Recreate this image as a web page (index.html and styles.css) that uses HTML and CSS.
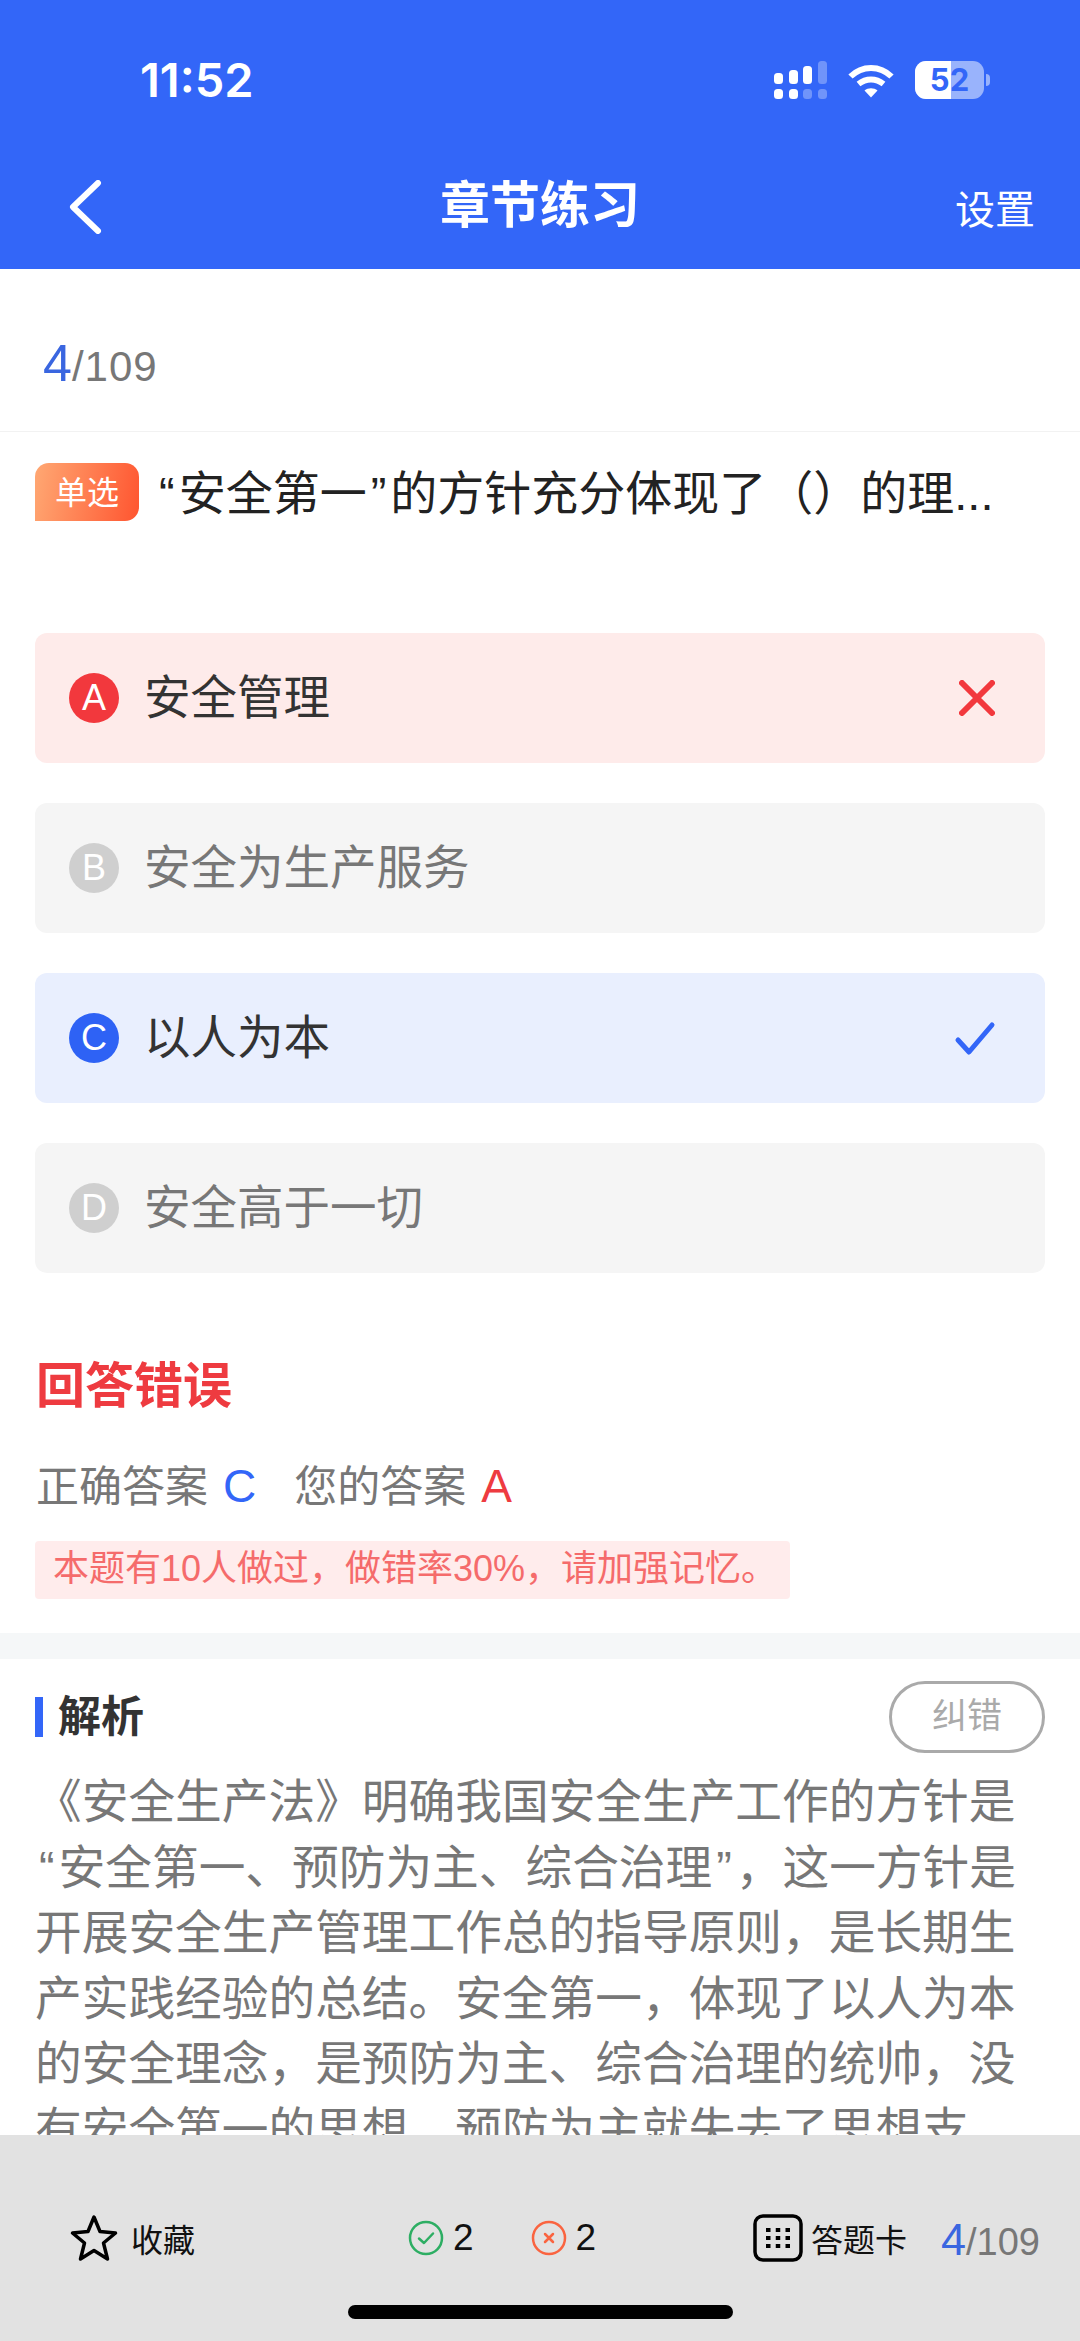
FILE: index.html
```html
<!DOCTYPE html>
<html lang="zh-CN">
<head>
<meta charset="utf-8">
<title>章节练习</title>
<link rel="stylesheet" href="styles.css">
</head>
<body>
<div class="page">
  <header class="header">
    <div class="status">
      <span class="time">11:52</span>
      <div class="status-icons">
        <svg class="signal" width="54" height="38" viewBox="0 0 54 38"><g fill="#fff"><rect x="0" y="12" width="9" height="11" rx="3.500"/><rect x="15" y="9" width="9" height="14" rx="3.500"/><rect x="29" y="5" width="9" height="18" rx="3.500"/><rect x="0" y="28" width="9" height="10" rx="3.500"/><rect x="15" y="28" width="9" height="10" rx="3.500"/></g><g fill="#fff" fill-opacity=".3"><rect x="44" y="0" width="9" height="23" rx="3.500"/><rect x="29" y="28" width="9" height="10" rx="3.500"/><rect x="44" y="28" width="9" height="10" rx="3.500"/></g></svg>
        <svg class="wifi" width="46" height="35" viewBox="0 0 46 35"><g fill="none" stroke="#fff" stroke-width="6"><path d="M2.500 13.500C14 2 32 2 43.500 13.500"/><path d="M10.500 21C18 15 28 15 35.500 21"/></g><path d="M16.500 27.500C20 24.500 26 24.500 29.500 27.500L23 34.500Z" fill="#fff"/></svg>
        <div class="battery">
          <div class="battery-body"><span class="battery-fill"></span><span class="battery-num">52</span></div>
          <span class="battery-nub"></span>
        </div>
      </div>
    </div>
    <div class="navbar">
      <svg class="back" width="36" height="54" viewBox="0 0 36 54"><path d="M31 3L6 27L31 51" fill="none" stroke="#fff" stroke-width="6" stroke-linecap="round" stroke-linejoin="round"/></svg>
      <h1 class="title">章节练习</h1>
      <span class="settings">设置</span>
    </div>
  </header>

  <main class="content">
    <div class="progress"><span class="cur">4</span><span class="total">/109</span></div>
    <div class="question">
      <span class="tag">单选</span>
      <span class="qtext"><span class="q">“</span>安全第一<span class="q">”</span>的方针充分体现了（）的理...</span>
    </div>

    <div class="options">
      <div class="option wrong">
        <span class="letter">A</span><span class="opt-text">安全管理</span>
        <svg class="mark" width="36" height="36" viewBox="0 0 36 36"><path d="M3 3L33 33M33 3L3 33" stroke="#F2383D" stroke-width="6" stroke-linecap="round" fill="none"/></svg>
      </div>
      <div class="option">
        <span class="letter">B</span><span class="opt-text">安全为生产服务</span>
      </div>
      <div class="option right">
        <span class="letter">C</span><span class="opt-text">以人为本</span>
        <svg class="mark check" width="44" height="36" viewBox="0 0 44 36"><path d="M5 20L16 32L39 5" stroke="#3366F8" stroke-width="5" stroke-linecap="round" stroke-linejoin="round" fill="none"/></svg>
      </div>
      <div class="option">
        <span class="letter">D</span><span class="opt-text">安全高于一切</span>
      </div>
    </div>

    <section class="result">
      <h2 class="result-title">回答错误</h2>
      <p class="answers">正确答案<span class="blue">C</span><span class="yours">您的答案</span><span class="red">A</span></p>
      <p class="notice">本题有10人做过，做错率30%，请加强记忆。</p>
    </section>

    <div class="sep"></div>

    <section class="analysis">
      <div class="analysis-head">
        <h3 class="analysis-title">解析</h3>
        <span class="fix">纠错</span>
      </div>
      <p class="analysis-body">《安全生产法》明确我国安全生产工作的方针是<span class="q">“</span>安全第一、预防为主、综合治理<span class="q">”</span>，这一方针是开展安全生产管理工作总的指导原则，是长期生产实践经验的总结。安全第一，体现了以人为本的安全理念，是预防为主、综合治理的统帅，没有安全第一的思想，预防为主就失去了思想支撑，综合治理就失去了整治依据。</p>
    </section>
  </main>

  <footer class="footer">
    <div class="tools">
      <div class="fav">
        <svg width="48" height="48" viewBox="0 0 48 48"><path d="M24 3L30 17.500L45.500 19L33.500 29L37.500 45L24 36.500L10.500 45L14.500 29L2.500 19L18 17.500Z" fill="none" stroke="#000" stroke-width="3.500" stroke-linejoin="round"/></svg>
        <span>收藏</span>
      </div>
      <div class="stats">
        <div class="stat">
          <svg width="36" height="36" viewBox="0 0 36 36"><circle cx="18" cy="18" r="16" fill="none" stroke="#2DAE63" stroke-width="2.500"/><path d="M11 18.500L16 23L25 13.500" fill="none" stroke="#2DAE63" stroke-width="2.500" stroke-linecap="round" stroke-linejoin="round"/></svg>
          <span>2</span>
        </div>
        <div class="stat">
          <svg width="36" height="36" viewBox="0 0 36 36"><circle cx="18" cy="18" r="16" fill="none" stroke="#FA6440" stroke-width="2.500"/><path d="M14 14L22 22M22 14L14 22" fill="none" stroke="#FA6440" stroke-width="2.500" stroke-linecap="round"/></svg>
          <span>2</span>
        </div>
      </div>
      <div class="card">
        <svg width="50" height="48" viewBox="0 0 50 48"><rect x="2" y="2" width="46" height="44" rx="8" fill="none" stroke="#000" stroke-width="3.500"/><g fill="#000"><rect x="13" y="14" width="4.500" height="4"/><rect x="22.750" y="14" width="4.500" height="4"/><rect x="32.500" y="14" width="4.500" height="4"/><rect x="13" y="22" width="4.500" height="4"/><rect x="22.750" y="22" width="4.500" height="4"/><rect x="32.500" y="22" width="4.500" height="4"/><rect x="13" y="30" width="4.500" height="4"/><rect x="22.750" y="30" width="4.500" height="4"/><rect x="32.500" y="30" width="4.500" height="4"/></g></svg>
        <span>答题卡</span>
      </div>
      <div class="mini-progress"><span class="cur">4</span><span class="total">/109</span></div>
    </div>
    <div class="home"></div>
  </footer>
</div>
</body>
</html>
```

FILE: styles.css
```css
* { box-sizing: border-box; margin: 0; padding: 0; }
html, body { width: 1080px; height: 2341px; overflow: hidden; background: #fff; }
body { font-family: "Liberation Sans", "Noto Sans CJK SC", sans-serif; color: #333; }
.page { width: 1080px; height: 2341px; display: flex; flex-direction: column; }

.header { height: 269px; background: #3366F8; color: #fff; flex: none; }
.status { height: 140px; padding: 61px 90px 0 140px; display: flex; justify-content: space-between; align-items: flex-start; }
.time { font-family: Inter, "Liberation Sans", sans-serif; font-weight: 600; font-size: 47px; line-height: 38px; }
.status-icons { display: flex; align-items: flex-start; }
.signal { display: block; margin-right: 20px; }
.wifi { display: block; margin: 2px 21px 0 0; }
.battery { display: flex; align-items: center; }
.battery-body { position: relative; width: 69px; height: 38px; border-radius: 11px; background: rgba(255,255,255,.5); overflow: hidden; display: flex; align-items: center; justify-content: center; }
.battery-fill { position: absolute; left: 0; top: 0; bottom: 0; width: 36px; background: #fff; }
.battery-num { position: relative; font-family: Inter, "Liberation Sans", sans-serif; font-weight: 700; font-size: 31px; line-height: 38px; color: #3366F8; }
.battery-nub { width: 4px; height: 12px; margin-left: 2px; background: rgba(255,255,255,.5); border-radius: 0 4px 4px 0; }

.navbar { position: relative; height: 129px; display: flex; align-items: center; justify-content: center; }
.back { position: absolute; left: 67px; top: 40px; }
.title { font-size: 50px; font-weight: 700; line-height: 60px; margin-top: 3px; }
.settings { position: absolute; right: 45px; top: 47px; font-size: 40px; line-height: 46px; }

.content { flex: 1; min-height: 0; overflow: hidden; }
.progress { height: 163px; border-bottom: 1px solid #f2f2f2; padding: 69px 0 0 43px; line-height: 50px; }
.cur { color: #3A66E0; font-size: 52px; }
.total { color: #777; font-size: 42px; letter-spacing: 1px; }

.question { height: 134px; padding: 31px 35px 0; display: flex; align-items: flex-start; }
.tag { width: 104px; height: 58px; border-radius: 14px 14px 14px 0; background: linear-gradient(100deg, #FFA873, #FF5530); color: #fff; font-size: 32px; line-height: 60px; text-align: center; flex: none; }
.qtext { margin-left: 16px; font-size: 47px; line-height: 62px; color: #222; white-space: nowrap; }
.q { padding: 0 4px; }

.options { padding: 67px 35px 0; display: flex; flex-direction: column; gap: 40px; }
.option { height: 130px; border-radius: 12px; background: #F5F5F5; display: flex; align-items: center; padding: 0 50px 0 34px; color: #777; }
.letter { width: 50px; height: 50px; border-radius: 50%; background: #CFCFCF; color: #fff; font-size: 36px; line-height: 50px; text-align: center; flex: none; }
.opt-text { margin-left: 25px; font-size: 46.500px; line-height: 56px; flex: 1; }
.option.wrong { background: #FEEBEA; color: #333; }
.option.wrong .letter { background: #F2383D; }
.option.right { background: #E9EFFE; color: #333; }
.option.right .letter { background: #2E62F5; }
.mark { flex: none; }
.check { margin-right: -2px; }

.result { padding: 83px 35px 0; }
.result-title { font-size: 49px; font-weight: 700; line-height: 60px; color: #EE3B40; margin-left: 1px; }
.answers { margin: 43px 0 0 1px; font-size: 43px; line-height: 54px; color: #777; }
.blue { color: #3366F8; font-size: 46px; margin-left: 15px; }
.red { color: #EE3B40; font-size: 46px; margin-left: 15px; }
.yours { margin-left: 38px; }
.notice { margin-top: 27px; width: 755px; height: 58px; border-radius: 4px; background: #FFECEC; color: #F56B6B; font-size: 36px; line-height: 56px; padding-left: 18px; white-space: nowrap; }

.sep { height: 26px; margin-top: 34px; background: #F5F7F8; }

.analysis { padding: 22px 35px 0; }
.analysis-head { display: flex; justify-content: space-between; align-items: center; height: 72px; }
.analysis-title { border-left: 8px solid #3366F8; height: 40px; line-height: 40px; padding-left: 15px; font-size: 43px; font-weight: 700; color: #333; }
.fix { width: 156px; height: 72px; border: 3px solid #aaa; border-radius: 36px; color: #aaa; font-size: 35px; line-height: 64px; text-align: center; }
.analysis-body { margin: 17px 0 0 0; width: 992px; font-size: 46.700px; line-height: 65.500px; color: #777; }

.footer { height: 206px; background: #E2E2E2; flex: none; position: relative; }
.tools { height: 170px; position: relative; display: flex; align-items: flex-start; padding: 79px 40px 0 70px; color: #111; font-size: 32px; }
.fav { display: flex; align-items: center; gap: 13px; width: 338px; flex: none; }
.fav svg, .card svg, .stat svg { flex: none; display: block; }
.stats { display: flex; gap: 57px; width: 345px; padding-top: 3px; flex: none; }
.stat { display: flex; align-items: center; gap: 9px; font-size: 37px; }
.card { display: flex; align-items: center; gap: 8px; margin-right: 34px; white-space: nowrap; flex: none; }
.mini-progress { line-height: 48px; white-space: nowrap; padding-top: 2px; }
.mini-progress .cur { font-size: 45px; color: #3A66E0; }
.mini-progress .total { font-size: 38px; letter-spacing: 0; }
.home { position: absolute; left: 348px; bottom: 22px; width: 385px; height: 14px; border-radius: 7px; background: #000; }
```
